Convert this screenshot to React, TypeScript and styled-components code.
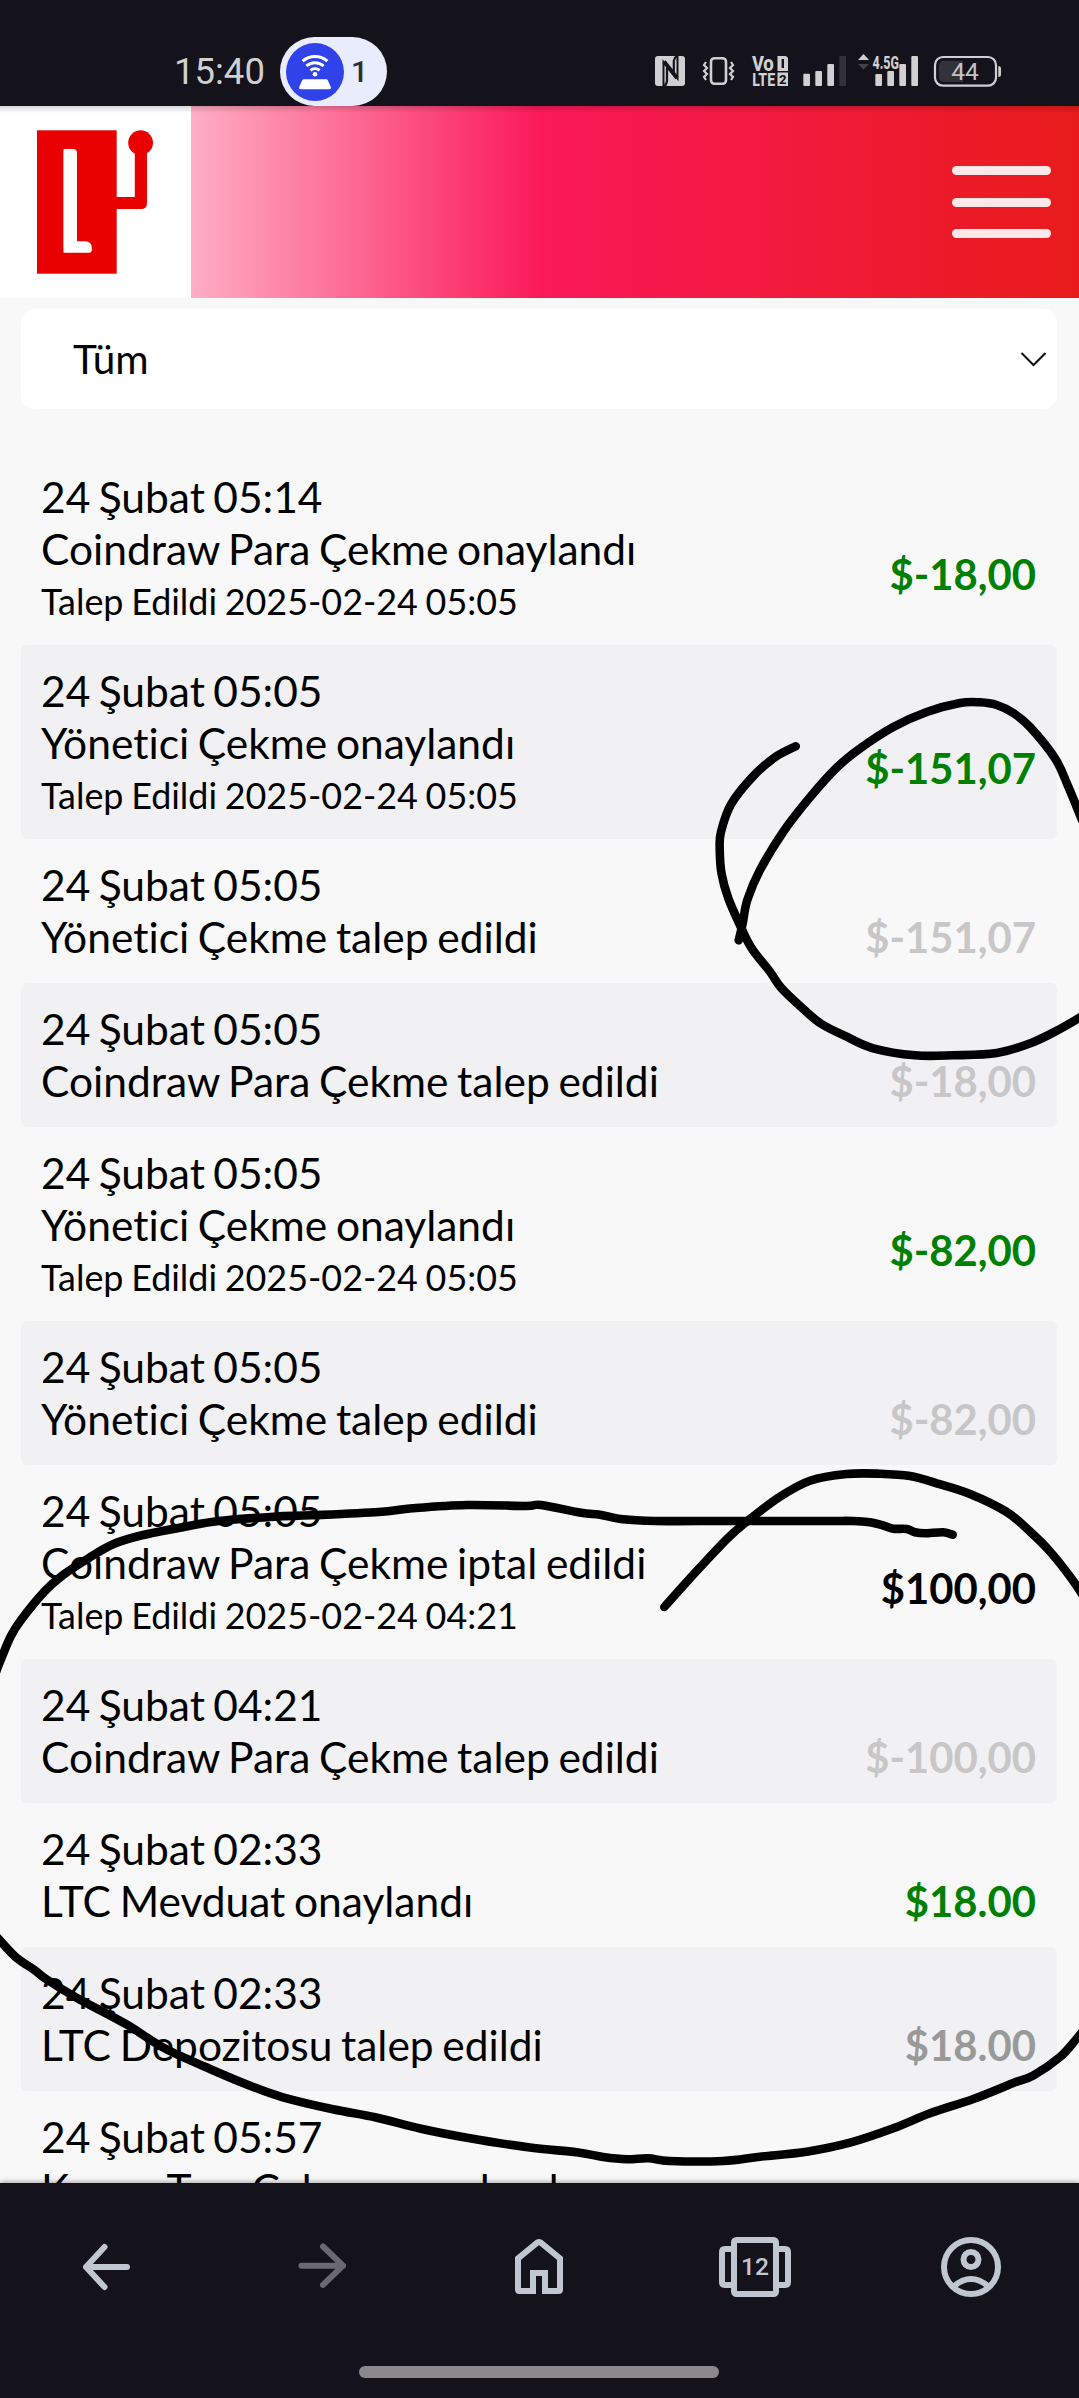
import React from "react";
import styled, { createGlobalStyle } from "styled-components";

const GlobalStyle = createGlobalStyle`
  *, *::before, *::after { box-sizing: border-box; }
  html, body { margin: 0; padding: 0; background: #f8f8f8; }
`;

const Screen = styled.div`
  position: relative;
  display: flex;
  flex-direction: column;
  width: 1079px;
  height: 2398px;
  overflow: hidden;
  background: #f8f8f8;
  color: #000;
  font-family: Lato, Carlito, sans-serif;
  font-variant-ligatures: none;
`;

/* ---------- status bar ---------- */

const StatusBar = styled.header`
  flex: none;
  display: flex;
  justify-content: space-between;
  height: 106px;
  padding: 37px 76px 0 174px;
  background: #14121b;
  font-family: Roboto, sans-serif;
`;

const StatusLeft = styled.div`
  display: flex;
  gap: 17px;
`;

const Clock = styled.span`
  width: 89px;
  padding-top: 14px;
  font-size: 36.5px;
  line-height: 42px;
  color: #d0d0d0;
  white-space: nowrap;
`;

const HotspotPill = styled.div`
  display: flex;
  align-items: center;
  gap: 7px;
  width: 107px;
  height: 69px;
  padding-left: 6px;
  border-radius: 35px;
  background: #e9ecfc;
  color: #2e2e36;
  font-size: 30px;
  font-weight: 500;
`;

const HotspotBadge = styled.div`
  width: 58px;
  height: 58px;
  border-radius: 50%;
  background: #3042e9;
`;

const StatusIcons = styled.svg`
  display: block;
  width: 350px;
  height: 36px;
  margin-top: 15px;
`;

/* ---------- site header ---------- */

const SiteHeader = styled.div`
  position: relative;
  flex: none;
  display: flex;
  align-items: center;
  justify-content: space-between;
  height: 192px;
  padding-right: 28px;
  background: linear-gradient(90deg, #fff 0%, #fb195a 50%, #e81b1a 100%);

  &::after {
    content: "";
    position: absolute;
    inset: 0 0 auto 0;
    height: 7px;
    background: linear-gradient(rgba(0, 0, 0, 0.16), rgba(0, 0, 0, 0));
  }
`;

const LogoBox = styled.div`
  width: 191px;
  height: 192px;
  background: #fff;
`;

const MenuButton = styled.div`
  display: flex;
  flex-direction: column;
  gap: 22.5px;
`;

const MenuLine = styled.span`
  width: 99.5px;
  height: 9px;
  border-radius: 5px;
  background: rgba(255, 255, 255, 0.9);
`;

/* ---------- list ---------- */

const Content = styled.main`
  flex: 1;
  min-height: 0;
  overflow: hidden;
  padding: 11px 22px 0 21px;
`;

const Filter = styled.div`
  display: flex;
  align-items: center;
  justify-content: space-between;
  height: 100px;
  margin-bottom: 42px;
  padding: 0 11px 0 52px;
  border-radius: 14px;
  background: #fff;
  font-size: 40.5px;
`;

const FilterLabel = styled.span`
  padding-bottom: 2px;
`;

const Row = styled.section<{ $tall: boolean }>`
  height: ${(p) => (p.$tall ? 194 : 144)}px;
  padding: 20px 21px 0 20px;
  border-radius: 6px;

  &:nth-of-type(even) {
    background: #f1f1f4;
  }
`;

const DateLine = styled.div`
  font-size: 42.5px;
  line-height: 52px;
  word-spacing: -2.5px;
  white-space: nowrap;
`;

const Details = styled.div`
  display: flex;
  align-items: center;
  justify-content: space-between;
  white-space: nowrap;
`;

const Title = styled.div`
  font-size: 42.5px;
  line-height: 52px;
  word-spacing: -2.2px;
`;

const Requested = styled.div`
  font-size: 35.9px;
  line-height: 53px;
  word-spacing: -1.5px;
`;

const Amount = styled.div<{ $color: string; $tall: boolean }>`
  margin-bottom: ${(p) => (p.$tall ? 3 : 0)}px;
  font-size: 41.8px;
  line-height: 52px;
  font-weight: 700;
  color: ${(p) => p.$color};
`;

/* ---------- browser bar ---------- */

const BrowserBar = styled.nav`
  position: relative;
  flex: none;
  display: flex;
  flex-direction: column;
  height: 215px;
  padding: 48px 0 0 69px;
  background: #14121b;
  box-shadow: 0 -1px 5px rgba(0, 0, 0, 0.35);
`;

const NavIcons = styled.div`
  display: flex;
  gap: 140px;
  height: 135px;
`;

const NavIcon = styled.svg<{ $dim?: boolean }>`
  display: block;
  flex: none;
  width: 76px;
  height: 72px;
  fill: none;
  stroke: ${(p) => (p.$dim ? "#6b6970" : "#c1c7d0")};
  stroke-width: 6;
`;

const HomeIndicator = styled.div`
  width: 360px;
  height: 12px;
  margin-left: 290px;
  border-radius: 6px;
  background: #8a888d;
`;

const Ink = styled.svg`
  position: absolute;
  inset: 0;
  width: 1079px;
  height: 2398px;
  fill: none;
  stroke: #000;
  stroke-width: 8.6;
  stroke-linecap: round;
  stroke-linejoin: round;
  pointer-events: none;
`;

type Point = [number, number];

/* Catmull-Rom spline through the points, written as cubic segments. */
function smooth(points: Point[]): string {
  let d = `M${points[0][0]} ${points[0][1]}`;
  for (let i = 0; i < points.length - 1; i++) {
    const p0 = points[Math.max(i - 1, 0)];
    const p1 = points[i];
    const p2 = points[i + 1];
    const p3 = points[Math.min(i + 2, points.length - 1)];
    const c1x = p1[0] + (p2[0] - p0[0]) / 6;
    const c1y = p1[1] + (p2[1] - p0[1]) / 6;
    const c2x = p2[0] - (p3[0] - p1[0]) / 6;
    const c2y = p2[1] - (p3[1] - p1[1]) / 6;
    d += `C${c1x} ${c1y} ${c2x} ${c2y} ${p2[0]} ${p2[1]}`;
  }
  return d;
}

const strokes: Point[][] = [
  [[795.7, 746.3], [775, 757.3], [752.7, 776.7], [731, 804.3], [721, 831.7], [719.7, 848.3], [721.5, 873.3], [728.3, 898.3], [741, 927.3], [751.7, 948.3], [770, 971.7], [781, 987.7], [800, 1006], [820.7, 1023.5], [846.7, 1036.7], [873.3, 1048.3], [915, 1055.3], [953.3, 1055.3], [996.7, 1053], [1031.7, 1042.7], [1060, 1029], [1084, 1015]],
  [[738.7, 940.3], [742.7, 923.3], [747.3, 900], [760, 870], [783.3, 831.7], [810, 797.3], [836.7, 767.7], [860, 748.5], [893.3, 727], [926.7, 712], [960, 703], [980, 702.3], [996.7, 705], [1013.3, 713], [1030, 727], [1055, 758.3], [1068, 786], [1082, 820]],
  [[664.3, 1607], [690, 1578.3], [726.7, 1539.3], [746.7, 1521.7], [780, 1496.7], [810, 1480.7], [846.7, 1474], [880, 1473.7], [910, 1476], [936.7, 1483.3], [970, 1494], [1006.7, 1512], [1030, 1531.5], [1050, 1551.5], [1070, 1576.5], [1084, 1597]],
  [[1084, 2030], [1076, 2039.5], [1060, 2057], [1033.3, 2075.5], [1013.3, 2083], [973.3, 2099], [930, 2113.3], [893.3, 2128.3], [850, 2142.7], [806.7, 2151.7], [760, 2156.7], [723.3, 2161], [670, 2161], [648.3, 2158.3], [626.7, 2159.3], [603.3, 2157], [576.7, 2152.3], [528, 2147.3], [467, 2137.7], [421, 2128.7], [375, 2117.3], [333, 2109.3], [283, 2097.3], [252.6, 2086.7], [214, 2070.7], [164.6, 2048.3], [126.3, 2024.3], [76.5, 1997.7], [46, 1979], [34.4, 1970], [15.3, 1956.7], [-4, 1936]],
  [[-4, 1672], [0, 1661.7], [10.5, 1636.7], [21, 1620], [44.2, 1591.7], [63, 1575], [88.4, 1558.3], [113.6, 1544], [143, 1535], [185, 1526.7], [219, 1521], [273.6, 1516.7], [311.4, 1515.3], [378.8, 1512], [412.5, 1508.3], [467, 1505], [526, 1506], [541, 1505], [581, 1512.7], [600, 1514.7], [623.3, 1519.3], [655, 1521], [700, 1521], [820, 1521], [853.3, 1521], [870, 1522.3], [883.3, 1525.5], [893.3, 1528.7], [906.7, 1529], [915, 1532.3], [925, 1533.3], [943.3, 1532.3], [952.7, 1534.7]],
];

interface Entry {
  date: string;
  title: string;
  requested?: string;
  amount?: string;
  color?: string;
}

const GREEN = "#008000";
const PALE = "#c7c7c7";

const entries: Entry[] = [
  { date: "24 Şubat 05:14", title: "Coindraw Para Çekme onaylandı", requested: "Talep Edildi 2025-02-24 05:05", amount: "$-18,00", color: GREEN },
  { date: "24 Şubat 05:05", title: "Yönetici Çekme onaylandı", requested: "Talep Edildi 2025-02-24 05:05", amount: "$-151,07", color: GREEN },
  { date: "24 Şubat 05:05", title: "Yönetici Çekme talep edildi", amount: "$-151,07", color: PALE },
  { date: "24 Şubat 05:05", title: "Coindraw Para Çekme talep edildi", amount: "$-18,00", color: PALE },
  { date: "24 Şubat 05:05", title: "Yönetici Çekme onaylandı", requested: "Talep Edildi 2025-02-24 05:05", amount: "$-82,00", color: GREEN },
  { date: "24 Şubat 05:05", title: "Yönetici Çekme talep edildi", amount: "$-82,00", color: PALE },
  { date: "24 Şubat 05:05", title: "Coindraw Para Çekme iptal edildi", requested: "Talep Edildi 2025-02-24 04:21", amount: "$100,00", color: "#000" },
  { date: "24 Şubat 04:21", title: "Coindraw Para Çekme talep edildi", amount: "$-100,00", color: PALE },
  { date: "24 Şubat 02:33", title: "LTC Mevduat onaylandı", amount: "$18.00", color: GREEN },
  { date: "24 Şubat 02:33", title: "LTC Depozitosu talep edildi", amount: "$18.00", color: "#999" },
  { date: "24 Şubat 05:57", title: "Kavun Tam Çekme onaylandı" },
];

const HotspotIcon = () => (
  <svg width="58" height="58" viewBox="0 0 58 58" fill="none" stroke="#fff" strokeWidth="3">
    <path d="M16.600 18.200a19 19 0 0 1 24.800 0M20.400 23a13 13 0 0 1 17.200 0M24.400 27.400a7.400 7.400 0 0 1 9.200 0" />
    <circle cx="29" cy="31.300" r="2.300" fill="#fff" stroke="none" />
    <path d="M18 36.300h22q1.400 0 1.900 1.300l3 6.600q.6 2-1.500 2H14.600q-2.100 0-1.500-2l3-6.600q.5-1.300 1.900-1.300z" fill="#fff" stroke="none" />
  </svg>
);

const SystemIcons = () => (
  <StatusIcons viewBox="653 52 350 36" fill="#d0d0d0">
    <path d="M658 56h24q3 0 3 3v24q0 3-3 3h-24q-3 0-3-3V59q0-3 3-3z" />
    <path d="M663.500 86V62l14 16.500V56" fill="none" stroke="#14121b" strokeWidth="2" />
    <path d="M664 61.500l13 16.500" stroke="#14121b" strokeWidth="4" />
    <path d="M667 68v13q-.5 3.500-2.500 5M673.800 74V61q.5-3.500 3-5" fill="none" stroke="#14121b" strokeWidth="2.200" />
    <rect x="711" y="58.200" width="15" height="25.600" rx="3.500" fill="none" stroke="#d0d0d0" strokeWidth="2.600" />
    <path d="M706 62l-2 3 3 3-3 3 3 3-3 3 2 3M731 62l2 3-3 3 3 3-3 3 3 3-2 3" fill="none" stroke="#d0d0d0" strokeWidth="2.200" />
    <g fontFamily="Roboto, sans-serif" fontWeight="800">
      <text x="752" y="70.500" fontSize="19.500" textLength="12" lengthAdjust="spacingAndGlyphs">V</text>
      <text x="763.200" y="70.500" fontSize="22.500" textLength="10.500" lengthAdjust="spacingAndGlyphs">o</text>
      <text x="752.200" y="86" fontSize="18.700" textLength="23" lengthAdjust="spacingAndGlyphs">LTE</text>
      <path d="M777.500 56h8.500l2 2v13h-10.500zM777.500 72.500h10.500V86h-10.500z" />
      <g fill="#14121b">
        <rect x="781.600" y="59" width="2.400" height="9" />
        <text x="779" y="84" fontSize="13">2</text>
      </g>
      <text x="872.500" y="69" fontSize="18.500" textLength="26.500" lengthAdjust="spacingAndGlyphs">4.5G</text>
    </g>
    <rect x="803.300" y="73.700" width="6.700" height="12.300" rx="1" />
    <rect x="815.300" y="71" width="6.700" height="15" rx="1" />
    <rect x="827.300" y="64" width="6.700" height="22" rx="1" />
    <rect x="839.300" y="56" width="6.700" height="30" rx="1" fill="#333239" />
    <path d="M858 60l5.500-6 5.500 6z" />
    <path d="M858 64l5.500 5.500 5.500-5.500z" fill="#44434a" />
    <rect x="875.300" y="74" width="6.700" height="12" rx="1" />
    <rect x="887.300" y="71" width="6.700" height="15" rx="1" />
    <rect x="899.300" y="64" width="6.700" height="22" rx="1" />
    <rect x="911.300" y="56" width="6.700" height="30" rx="1" />
    <rect x="935" y="57" width="61" height="28.700" rx="8" fill="none" stroke="#d0d0d0" strokeWidth="2.200" />
    <path d="M963 60.700h-19q-5 0-5 5V77q0 5 5 5h19z" fill="#333239" />
    <path d="M998.300 66q2.700 0 2.700 2.500v6q0 2.500-2.700 2.500z" />
    <text x="965" y="80" fontSize="24.500" textAnchor="middle" fontWeight="400" fill="#c4c4c6" fontFamily="Roboto, sans-serif">44</text>
  </StatusIcons>
);

const Logo = () => (
  <svg width="191" height="192" viewBox="0 106 191 192">
    <rect x="37" y="130.300" width="79.700" height="143.400" fill="#e90000" />
    <path d="M64.400 149h8.600q4 0 4 4v88.300h8q7 0 7 7.500 0 4-3 4H64.400q-1 0-1-1V150q0-1 1-1z" fill="#fff" />
    <path d="M116 196.900h18.800V146H147v57q0 6-6 6H116z" fill="#e90000" />
    <circle cx="140.600" cy="142.700" r="12.400" fill="#e90000" />
  </svg>
);

export default function App() {
  return (
    <Screen>
      <GlobalStyle />
      <StatusBar>
        <StatusLeft>
          <Clock>15:40</Clock>
          <HotspotPill>
            <HotspotBadge>
              <HotspotIcon />
            </HotspotBadge>
            1
          </HotspotPill>
        </StatusLeft>
        <SystemIcons />
      </StatusBar>

      <SiteHeader>
        <LogoBox>
          <Logo />
        </LogoBox>
        <MenuButton>
          <MenuLine />
          <MenuLine />
          <MenuLine />
        </MenuButton>
      </SiteHeader>

      <Content>
        <Filter>
          <FilterLabel>Tüm</FilterLabel>
          <svg width="26" height="16" viewBox="0 0 26 16" fill="none" stroke="#111" strokeWidth="2">
            <path d="M1.500 2l12 12 12-12" />
          </svg>
        </Filter>
        {entries.map((e, i) => {
          const tall = Boolean(e.requested);
          return (
            <Row key={i} $tall={tall}>
              <DateLine>{e.date}</DateLine>
              <Details>
                <div>
                  <Title>{e.title}</Title>
                  {e.requested && <Requested>{e.requested}</Requested>}
                </div>
                {e.amount && (
                  <Amount $color={e.color ?? "#000"} $tall={tall}>
                    {e.amount}
                  </Amount>
                )}
              </Details>
            </Row>
          );
        })}
      </Content>

      <BrowserBar>
        <NavIcons>
          <NavIcon viewBox="69 2231 76 72" strokeLinecap="round">
            <path d="M127 2267H86M104.500 2247l-18.500 20 18.500 20" strokeLinejoin="round" />
          </NavIcon>
          <NavIcon $dim viewBox="285 2231 76 72" strokeLinecap="round">
            <path d="M301.500 2265.700H343M323 2246.500l20 19.200-20 19.200" strokeLinejoin="round" />
          </NavIcon>
          <NavIcon viewBox="501 2231 76 72">
            <path d="M536 2291h-16.500q-1.500 0-1.500-1.500V2258.500l19.500-16q1.500-1 3 0l19.500 16V2289.500q0 1.500-1.500 1.500H545v-18H533v21" />
          </NavIcon>
          <NavIcon viewBox="717 2231 76 72">
            <rect x="734" y="2240" width="42" height="54" rx="2.500" />
            <path d="M734 2249h-9q-3 0-3 3v30q0 3 3 3h9M776 2249h9q3 0 3 3v30q0 3-3 3h-9" />
            <text x="755" y="2275.300" fontSize="24.500" fontWeight="500" fontFamily="Roboto, sans-serif" textAnchor="middle" fill="#c1c7d0" stroke="none">12</text>
          </NavIcon>
          <NavIcon viewBox="933 2231 76 72">
            <circle cx="971" cy="2267" r="27" />
            <circle cx="971" cy="2259.500" r="7.500" />
            <path d="M953.500 2286.500q17.500-15 35 0" />
          </NavIcon>
        </NavIcons>
        <HomeIndicator />
      </BrowserBar>

      <Ink viewBox="0 0 1079 2398">
        {strokes.map((points, i) => (
          <path key={i} d={smooth(points)} />
        ))}
      </Ink>
    </Screen>
  );
}
